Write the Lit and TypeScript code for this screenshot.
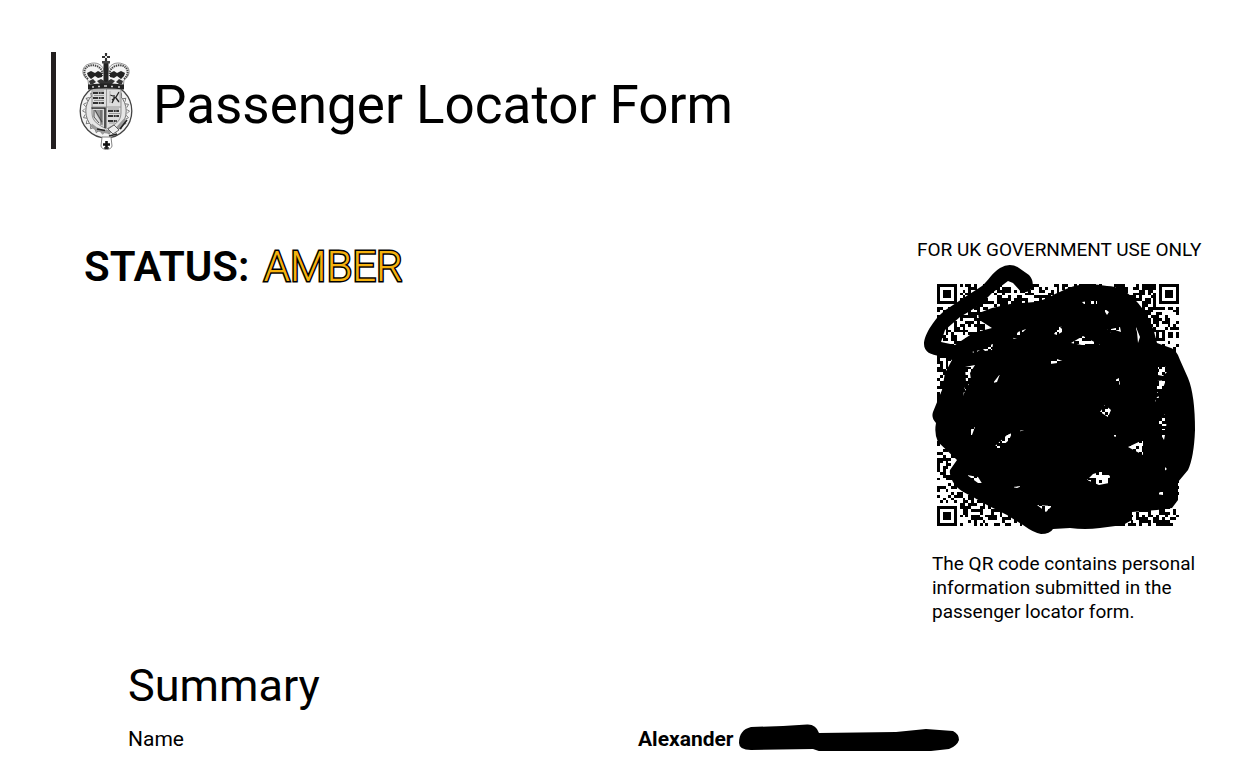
import { LitElement, html, css, svg } from "lit";
import { customElement } from "lit/decorators.js";

@customElement("royal-crest")
class RoyalCrest extends LitElement {
  static styles = css`
    :host { display: block; flex: none; }
    svg { display: block; width: 54px; height: 98px; }
  `;

  render() {
    const studs = Array.from({ length: 22 }, (_, i) => {
      const a = (i / 22) * 360;
      return svg`<path d="M47.500 57.500l3 1.500-2.500 2.500" fill="none" stroke="#777" stroke-width="0.900" transform="rotate(${a.toFixed(1)} 27 59)"/>`;
    });
    return html`<svg viewBox="0 0 54 98" role="img" aria-label="Royal coat of arms">
      <ellipse cx="27" cy="59" rx="25.800" ry="26.800" fill="#f4f4f4" stroke="#444" stroke-width="1.300"/>
      ${studs}
      <ellipse cx="27" cy="59" rx="20.200" ry="21.400" fill="#e6e6e6" stroke="#666" stroke-width="0.900"/>
      <path d="M13 36H42V61C42 70 35 73 27.500 77C20 73 13 70 13 61Z" fill="#ddd" stroke="#777" stroke-width="0.800"/>
      <path d="M14 41h11M14 46h11M14 51h11M29 59h11M29 64h11M29 69h9" stroke="#333" stroke-width="1.800" stroke-dasharray="5 0.700 2 0.500"/>
      <path d="M14 39h11M15 43.500h10M15 48.500h10M29 57h11M30 61.500h11M30 71h6" stroke="#888" stroke-width="0.800"/>
      <path d="M33 48l4-3 3-5M35 43v4l-2 4M37 46l3 4M31 43l3 1" fill="none" stroke="#222" stroke-width="1.300"/>
      <path d="M31 39v12M41 39v12" fill="none" stroke="#aaa" stroke-width="0.800"/>
      <path d="M12.500 56H26V76" fill="none" stroke="#222" stroke-width="1.500"/>
      <path d="M15 58L24 74V58Z" fill="#999"/>
      <path d="M15 58v7l5 6M22 58v15M16 58l7 12" fill="none" stroke="#444" stroke-width="0.900"/>
      <path d="M27.500 37V76M13 55H42" stroke="#888" stroke-width="0.800"/>
      <path d="M12 73C19 79 29 83 39 76L46 68" fill="none" stroke="#999" stroke-width="3.500"/>
      <path d="M18 77l8 1.500M41 77l7-9M30 84l8-2" stroke="#222" stroke-width="1.600"/>
      <path d="M29 77l6-4 5 5-6 4z" fill="#eee" stroke="#555" stroke-width="0.900"/>
      <path d="M10 37L9 28C2 24 2 14 10 12C17 9 25 13 25 20H29C29 13 37 9 44 12C52 14 52 24 45 28L44 37Z" fill="#f4f4f4" stroke="#777" stroke-width="0.800"/>
      <path d="M9 27C3 22 5 15 11 13.500C18 12 25 17 23 24M45 27C51 22 49 15 43 13.500C36 12 29 17 31 24" fill="none" stroke="#444" stroke-width="2" stroke-dasharray="1.400 0.800"/>
      <path d="M8 21l4-2 4 2 3-2 4 2v4l-4 1-3-2-4 3-3-3zM46 21l-4-2-4 2-3-2-4 2v4l4 1 3-2 4 3 3-3zM24.500 11h5v19h-5z" fill="#222"/>
      <path d="M10 29l4-2 3 3-3 2-3 0zM18 29l4-2 5 3 5-3 4 2-3 3H21zM37 30l3-3 4 2-1 3h-3z" fill="#333"/>
      <path d="M9 32.500Q27 30.500 45 32.500V37.500Q27 35.500 9 37.500Z" fill="#222"/>
      <path d="M13 35h2M19 34.500h2M25 34h3M32 34.500h2M39 35h2" stroke="#ccc" stroke-width="1.400"/>
      <path d="M27 1V10M23 5H31" stroke="#333" stroke-width="2.200"/>
      <path d="M24.500 2.500l5 5M29.500 2.500l-5 5" stroke="#fff" stroke-width="0.900"/>
      <path d="M23 9h8v2.500h-8z" fill="#444"/>
      <path d="M23 85H32L33 94C33 96 30 97.500 27.500 97.500C25 97.500 22 96 22 94Z" fill="#fff" stroke="#777" stroke-width="0.900"/>
      <path d="M27.500 89v8M24 92.500h7" stroke="#111" stroke-width="2.600"/>
      <path d="M25 96h5" stroke="#222" stroke-width="1.400"/>
    </svg>`;
  }
}

const SIZE = 85;

function modulePath(): string {
  let seed = 20211;
  const next = () => {
    seed = (Math.imul(seed, 1664525) + 1013904223) >>> 0;
    return seed / 4294967296;
  };
  const finder = (x: number, y: number): boolean | null => {
    for (const [fx, fy] of [[0, 0], [SIZE - 7, 0], [0, SIZE - 7]]) {
      const d = Math.max(Math.abs(x - fx - 3), Math.abs(y - fy - 3));
      if (d <= 4) return d !== 2 && d !== 4;
    }
    return null;
  };
  let d = "";
  for (let y = 0; y < SIZE; y++) {
    for (let x = 0; x < SIZE; x++) {
      const random = next() < 0.48;
      if (finder(x, y) ?? random) d += `M${x} ${y}h1v1h-1z`;
    }
  }
  return d;
}

// Outline of the marker, followed by the gaps between its strokes.
const MARKER =
  "M1030 291Q1036 283 1029 275L1019 268Q1010 262 1000 268C992 273 988 281 982 286L965 297L947 309C935 317 924 335 924 344C924 352 931 355 940 356L952 360L945 373L942 390L933 412Q931 418 936 423Q934 434 938 442L957 460L950 470Q949 476 953 482C958 490 965 493 973 497L987 505L1007 515L1023 525Q1034 533 1041 534Q1050 534 1053 529L1070 528Q1085 530 1100 528L1123 525L1132 520V512L1157 510L1172 508L1178 500V482L1188 470Q1194 457 1195 430Q1195 395 1188 378L1180 360Q1176 348 1168 347L1157 343Q1152 318 1138 303Q1123 286 1107 286Q1092 283 1080 285C1070 286 1063 291 1055 294Q1045 300 1035 302L1010 304L992 308L979 313Q977 318 981 321L992 328L973 333L955 345L941 342L945 330L960 317L980 305L992 293L1008 281L1013 283L1022 293Z" +
  "M1013 339L1018 332L1026 329L1017 338ZM1054 334L1059 327L1068 326L1062 332L1057 335ZM1045 362L1057 359L1065 362L1050 364ZM982 348L993 344L992 350L985 351ZM972 352L980 350L975 353ZM965 367L975 365L970 373L971 380L965 391L963 396L966 382ZM993 383L1000 374L997 382Z" +
  "M1082 302L1097 300V304L1084 304ZM1102 307L1109 312L1107 315ZM1107 330L1120 327L1121 332L1115 330L1112 333ZM1134 322L1140 337L1138 343L1137 332ZM1071 343L1083 336L1100 345L1082 345ZM1060 327L1072 326L1062 329ZM1158 367L1165 366L1167 372L1163 376L1158 375ZM1157 381L1166 380L1163 388L1157 393ZM1155 402L1157 397L1160 396ZM1113 381L1119 378L1120 385L1117 382Z" +
  "M1100 412L1105 405L1111 410L1108 417ZM1158 422L1167 412L1166 430L1160 430ZM1161 435L1165 435L1164 440ZM1128 447L1143 440V455ZM1113 435H1118L1115 437ZM1162 464L1167 469L1163 472ZM1087 480L1093 474L1103 471L1110 476L1109 483L1099 485ZM1156 494L1163 491V495ZM1070 501L1076 505H1073Z" +
  "M968 438L970 430L975 427L972 435ZM993 448L1007 435L1012 433L1009 440L1000 448ZM1018 431L1024 430L1018 432ZM967 475L978 477L983 485L978 483ZM1012 487L1022 486L1017 488ZM1037 505L1052 506L1046 512Z";

@customElement("qr-code")
class QrCode extends LitElement {
  static styles = css`
    :host { display: block; }
    svg { display: block; width: 280px; height: 280px; }
  `;

  render() {
    return html`<svg viewBox="920 260 280 280" role="img" aria-label="Obscured QR code">
      <path d=${modulePath()} transform="translate(937 284) scale(2.847)" shape-rendering="crispEdges"/>
      <path d=${MARKER} fill-rule="evenodd"/>
    </svg>`;
  }
}

@customElement("app-root")
class AppRoot extends LitElement {
  static styles = css`
    :host {
      display: block;
      background: #fff;
      color: #000;
      font-family: Roboto, "Liberation Sans", sans-serif;
      font-size: 21px;
      line-height: 24px;
    }
    h1, h2, p, dl, dd, dt { margin: 0; font-weight: 400; }
    header {
      display: flex;
      align-items: center;
      gap: 20px;
      margin: 52px 51px 0;
      padding-left: 23px;
      border-left: 5px solid #231f20;
      height: 97px;
    }
    h1 { font-size: 53px; line-height: 64px; padding-top: 8px; }
    .overview {
      display: flex;
      justify-content: space-between;
      align-items: flex-start;
      padding: 90px 50px 0 84px;
    }
    .status { font-size: 42px; line-height: 56px; }
    .status strong { font-weight: 600; }
    .amber {
      margin-left: 4px;
      color: #f5b20f;
      font-weight: 300;
      -webkit-text-stroke: 3px #000;
      paint-order: stroke fill;
    }
    .official { width: 293px; font-size: 19px; line-height: 22px; }
    .official .heading { white-space: nowrap; }
    .official qr-code { margin: -1px 0 0 3px; }
    .official .note { line-height: 24px; padding: 12px 0 0 15px; }
    .summary { padding: 34px 112px 0 128px; }
    h2 { font-size: 45px; line-height: 56px; }
    dl { display: grid; grid-template-columns: 1fr 1fr; padding-top: 13px; }
    dd { display: flex; align-items: center; gap: 5px; height: 24px; font-weight: 700; }
    .redaction { width: 221px; height: 30px; flex: none; }
  `;

  render() {
    return html`
      <header>
        <royal-crest></royal-crest>
        <h1>Passenger Locator Form</h1>
      </header>
      <main>
        <section class="overview">
          <p class="status"><strong>STATUS:</strong> <span class="amber">AMBER</span></p>
          <div class="official">
            <p class="heading">FOR UK GOVERNMENT USE ONLY</p>
            <qr-code></qr-code>
            <p class="note">The QR code contains personal information submitted in the passenger locator form.</p>
          </div>
        </section>
        <section class="summary">
          <h2>Summary</h2>
          <dl>
            <dt>Name</dt>
            <dd>
              Alexander
              <svg class="redaction" viewBox="738 722 221 30" role="img" aria-label="Redacted">
                <path d="M738 741C738 732 742 727 750 725L782 724L806 722.500Q815 722 818 731L895 730L925 727L952 729Q958 732 958 738Q956 744 948 747L912 751H832Q822 751 812 747L750 748Q738 748 738 741Z"/>
              </svg>
            </dd>
          </dl>
        </section>
      </main>
    `;
  }
}
